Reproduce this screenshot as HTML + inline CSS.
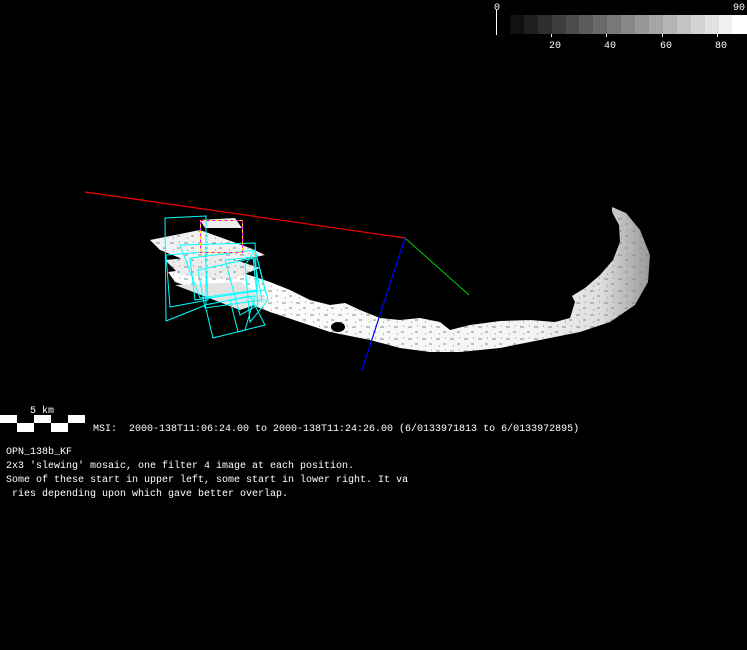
<!DOCTYPE html>
<html><head><meta charset="utf-8"><style>
html,body{margin:0;padding:0;background:#000;width:747px;height:650px;overflow:hidden}
svg{position:absolute;left:0;top:0}
.t{font-family:"Liberation Mono",monospace;font-size:10px;fill:#fff;white-space:pre}
</style></head><body>
<svg width="747" height="650" viewBox="0 0 747 650" xml:space="preserve">
<defs>
<pattern id="hatch" width="14" height="12" patternUnits="userSpaceOnUse">
<path d="M2 3h4M9 8h3M5 10h1M11 2h1" stroke="#888" stroke-width="1"/>
</pattern>
<linearGradient id="g1" x1="0" y1="0" x2="1" y2="0">
<stop offset="0" stop-color="#fff"/><stop offset="0.75" stop-color="#f4f4f4"/><stop offset="0.9" stop-color="#ddd"/><stop offset="1" stop-color="#999"/>
</linearGradient>
</defs>
<line x1="496.5" y1="10" x2="496.5" y2="35" stroke="#fff"/>
<g>
<rect x="510" y="15" width="14" height="19" fill="#111"/>
<rect x="524" y="15" width="14" height="19" fill="#1f1f1f"/>
<rect x="538" y="15" width="14" height="19" fill="#2e2e2e"/>
<rect x="552" y="15" width="14" height="19" fill="#3d3d3d"/>
<rect x="566" y="15" width="13" height="19" fill="#4c4c4c"/>
<rect x="579" y="15" width="14" height="19" fill="#5b5b5b"/>
<rect x="593" y="15" width="14" height="19" fill="#6a6a6a"/>
<rect x="607" y="15" width="14" height="19" fill="#797979"/>
<rect x="621" y="15" width="14" height="19" fill="#888"/>
<rect x="635" y="15" width="14" height="19" fill="#979797"/>
<rect x="649" y="15" width="14" height="19" fill="#a6a6a6"/>
<rect x="663" y="15" width="14" height="19" fill="#b5b5b5"/>
<rect x="677" y="15" width="14" height="19" fill="#c4c4c4"/>
<rect x="691" y="15" width="14" height="19" fill="#d3d3d3"/>
<rect x="705" y="15" width="14" height="19" fill="#e2e2e2"/>
<rect x="719" y="15" width="13" height="19" fill="#f1f1f1"/>
<rect x="732" y="15" width="15" height="19" fill="#fff"/>
</g>
<line x1="551.5" y1="34" x2="551.5" y2="37" stroke="#fff"/>
<line x1="606.5" y1="34" x2="606.5" y2="37" stroke="#fff"/>
<line x1="662.5" y1="34" x2="662.5" y2="37" stroke="#fff"/>
<line x1="717.5" y1="34" x2="717.5" y2="37" stroke="#fff"/>
<text class="t" x="494" y="10">0</text>
<text class="t" x="733" y="10">90</text>
<text class="t" x="549" y="48">20</text>
<text class="t" x="604" y="48">40</text>
<text class="t" x="660" y="48">60</text>
<text class="t" x="715" y="48">80</text>

<path id="body" d="M612 207 L626 213 L640 230 L650 255 L648 282 L635 305 L610 322 L580 332 L540 340 L500 348 L460 352 L430 352 L400 348 L370 340 L330 332 L300 322 L270 312 L240 300 L205 292 L175 282 L168 272 L200 268 L240 272 L270 282 L290 290 L310 300 L330 305 L345 303 L360 310 L380 318 L400 320 L420 318 L440 322 L450 330 L470 325 L500 321 L530 320 L555 322 L570 318 L575 302 L572 296 L585 288 L600 275 L613 260 L620 242 L619 225 L612 212 Z" fill="url(#g1)"/>
<path d="M612 207 L626 213 L640 230 L650 255 L648 282 L635 305 L610 322 L580 332 L540 340 L500 348 L460 352 L430 352 L400 348 L370 340 L330 332 L300 322 L270 312 L240 300 L205 292 L175 282 L168 272 L200 268 L240 272 L270 282 L290 290 L310 300 L330 305 L345 303 L360 310 L380 318 L400 320 L420 318 L440 322 L450 330 L470 325 L500 321 L530 320 L555 322 L570 318 L575 302 L572 296 L585 288 L600 275 L613 260 L620 242 L619 225 L612 212 Z" fill="url(#hatch)"/>
<path d="M370 325 L440 330 L430 352 L400 348 L370 340 Z" fill="url(#hatch)"/>
<ellipse cx="338" cy="327" rx="7" ry="5" fill="#000"/>
<path d="M150 240 L200 230 L250 248 L265 255 L230 262 L190 262 L160 250 Z" fill="#f2f2f2"/>
<path d="M150 240 L200 230 L250 248 L265 255 L230 262 L190 262 L160 250 Z" fill="url(#hatch)"/>
<path d="M165 260 L220 255 L260 268 L230 280 L180 275 Z" fill="#ececec"/>
<path d="M165 260 L220 255 L260 268 L230 280 L180 275 Z" fill="url(#hatch)"/>
<path d="M200 220 L235 218 L242 228 L205 228 Z" fill="#eee"/>
<path d="M175 285 L240 282 L270 300 L240 310 Z" fill="#e4e4e4"/>
<line x1="85" y1="192" x2="405" y2="238" stroke="#f00" stroke-width="1.2"/>
<line x1="405" y1="238" x2="469" y2="295" stroke="#0c0" stroke-width="1"/>
<line x1="405" y1="238" x2="362" y2="370" stroke="#00f" stroke-width="1.2"/>
<g fill="none" stroke="#0ff" stroke-width="1">
<path d="M165 218 L206 216 L206 305 L166 321 Z"/>
<path d="M166 255 L205 252 L208 300 L170 307 Z"/>
<path d="M190 258 L255 250 L265 290 L195 300 Z"/>
<path d="M198 270 L254 258 L262 300 L205 308 Z"/>
<path d="M225 260 L253 257 L258 305 L240 315 Z"/>
<path d="M205 305 L250 296 L265 325 L213 338 Z"/>
<path d="M230 300 L255 296 L245 330 L238 332 Z"/>
<path d="M180 245 L255 243 L257 290 L200 298 Z"/>
<path d="M245 265 L255 250 L268 300 L250 322 Z"/>
</g>
<rect x="200.5" y="220.5" width="42" height="32" fill="none" stroke="#f0f" stroke-dasharray="3 3"/>
<rect x="200.5" y="220.5" width="42" height="32" fill="none" stroke="#ff0" stroke-dasharray="3 3" stroke-dashoffset="3"/>

<text class="t" x="30" y="413">5 km</text>
<rect x="0" y="415" width="85" height="17" fill="#fff"/>
<rect x="0" y="423" width="17" height="9" fill="#000"/>
<rect x="17" y="415" width="17" height="8" fill="#000"/>
<rect x="34" y="423" width="17" height="9" fill="#000"/>
<rect x="51" y="415" width="17" height="8" fill="#000"/>
<rect x="68" y="423" width="17" height="9" fill="#000"/>
<text class="t" x="93" y="431">MSI:  2000-138T11:06:24.00 to 2000-138T11:24:26.00 (6/0133971813 to 6/0133972895)</text>
<text class="t" x="6" y="454">OPN_138b_KF</text>
<text class="t" x="6" y="468">2x3 'slewing' mosaic, one filter 4 image at each position.</text>
<text class="t" x="6" y="482">Some of these start in upper left, some start in lower right. It va</text>
<text class="t" x="12" y="496">ries depending upon which gave better overlap.</text>
</svg>
</body></html>
